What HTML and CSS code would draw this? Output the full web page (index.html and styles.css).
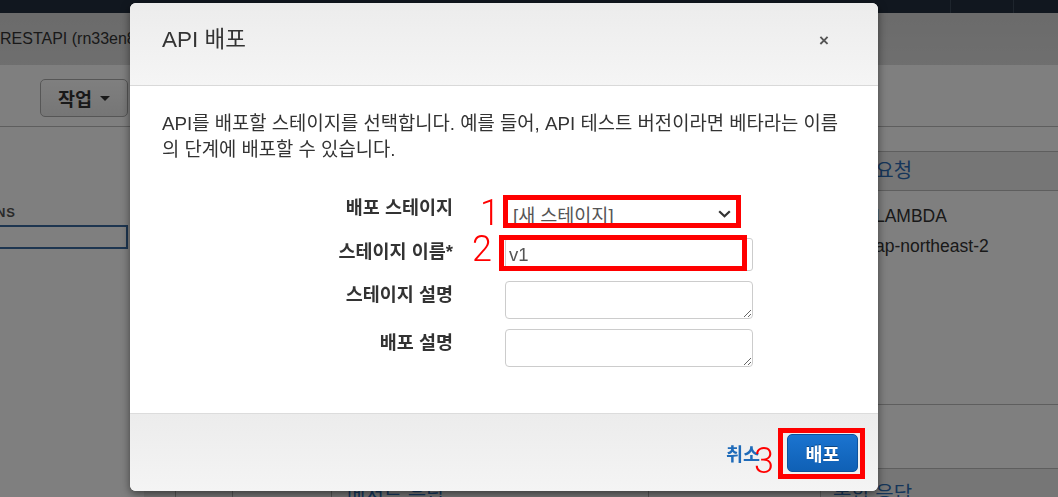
FILE: index.html
```html
<!DOCTYPE html>
<html lang="ko">
<head>
<meta charset="utf-8">
<title>API 배포</title>
<link rel="stylesheet" href="styles.css">
</head>
<body>
<div class="page">
  <div class="topbar">
    <span class="topbar-item wide"></span>
    <span class="topbar-item"></span>
  </div>
  <div class="crumbs">RESTAPI (rn33en8k2d) - /v1 - POST - 메서드 실행</div>
  <div class="toolbar">
    <button class="btn-action" type="button">작업 <span class="caret"></span></button>
  </div>
  <div class="content">
    <aside class="sidebar">
      <div class="side-head">OPERATIONS</div>
      <div class="side-input"></div>
    </aside>
    <section class="center">
      <div class="center-spacer"></div>
      <div class="center-bottom">
        <div class="cell c1"></div>
        <div class="cell c2"></div>
        <div class="cell c3"></div>
        <div class="cell c4">메서드 응답</div>
        <div class="cell c5"></div>
      </div>
    </section>
    <section class="right">
      <div class="right-gap"></div>
      <div class="right-head">통합 요청</div>
      <div class="right-row first">유형: LAMBDA</div>
      <div class="right-row">리전: ap-northeast-2</div>
      <div class="right-fill"></div>
      <div class="right-sep"></div>
      <div class="right-head bottom">통합 응답</div>
    </section>
  </div>
</div>

<div class="backdrop"></div>

<div class="modal" role="dialog" aria-labelledby="deploy-title">
  <div class="modal-header">
    <h4 class="modal-title" id="deploy-title">API 배포</h4>
    <button class="close" type="button" aria-label="닫기">×</button>
  </div>
  <div class="modal-body">
    <p class="intro">API를 배포할 스테이지를 선택합니다. 예를 들어, API 테스트 버전이라면 베타라는 이름의 단계에 배포할 수 있습니다.</p>
    <div class="form">
      <label class="form-label first">배포 스테이지</label>
      <div class="mark m1">
        <div class="select">
          <span>[새 스테이지]</span>
          <svg class="chev" width="13" height="8" viewBox="0 0 13 8"><path d="M1.2 1.2 L6.5 6.3 L11.8 1.2" fill="none" stroke="#333" stroke-width="2.2"/></svg>
        </div>
        <span class="num n1">1</span>
      </div>

      <label class="form-label">스테이지 이름*</label>
      <div class="mark m2">
        <input class="text-input" type="text" value="v1">
        <span class="num n2">2</span>
      </div>

      <label class="form-label">스테이지 설명</label>
      <textarea class="area"></textarea>

      <label class="form-label">배포 설명</label>
      <textarea class="area"></textarea>
    </div>
  </div>
  <div class="modal-footer">
    <a class="cancel" href="#">취소</a>
    <div class="mark m3">
      <button class="btn-primary" type="button">배포</button>
      <span class="num n3">3</span>
    </div>
  </div>
</div>
</body>
</html>
```

FILE: styles.css
```css
* { box-sizing: border-box; }

html, body {
  margin: 0;
  padding: 0;
}

body {
  width: 1058px;
  height: 497px;
  overflow: hidden;
  position: relative;
  background: #ffffff;
  color: #333;
  font-family: "Liberation Sans", "Noto Sans CJK KR", sans-serif;
}

/* ---------- background console page ---------- */
.page {
  display: flex;
  flex-direction: column;
  height: 497px;
}

.topbar {
  height: 13px;
  background: #232f3e;
  display: flex;
  justify-content: flex-end;
}
.topbar-item {
  width: 45px;
  border-left: 1px solid #3d4a5b;
}
.topbar-item.wide { width: 63px; }

.crumbs {
  height: 52px;
  background: linear-gradient(#d6d6d6, #dedede);
  font-size: 16px;
  line-height: 52px;
  color: #333;
  white-space: nowrap;
  overflow: hidden;
}

.toolbar {
  height: 62px;
  border-bottom: 1px solid #bdbdbd;
  padding: 14px 0 0 40px;
  background: #fff;
}

.btn-action {
  height: 38px;
  width: 88px;
  border: 1px solid #adadad;
  border-radius: 5px;
  background: linear-gradient(#ffffff, #ececec);
  font-family: inherit;
  font-size: 18.5px;
  font-weight: bold;
  color: #333;
  display: flex;
  align-items: center;
  justify-content: center;
  gap: 8px;
}
.caret {
  width: 0;
  height: 0;
  border-left: 5px solid transparent;
  border-right: 5px solid transparent;
  border-top: 5px solid #333;
}

.content {
  flex: 1;
  display: grid;
  grid-template-columns: 144px 676px 238px;
}

.sidebar {
  padding-top: 78px;
  padding-right: 16px;
}
.side-head {
  font-size: 13px;
  font-weight: bold;
  letter-spacing: 1px;
  color: #555;
  margin-left: -79px;
  white-space: nowrap;
}
.side-input {
  margin-top: 5px;
  height: 24px;
  margin-left: -4px;
  border: 2px solid #3b6aa0;
}

.center {
  display: flex;
  flex-direction: column;
}
.center-spacer { flex: 1; }
.center-bottom {
  height: 29px;
  display: grid;
  grid-template-columns: 31px 57px 99px 317px 172px;
  border-top: 1px solid #bdbdbd;
  background: #ececec;
}
.cell { border-left: 1px solid #aaa; }
.c1 { border-left: none; }
.c4 {
  color: #2a6ebb;
  font-size: 20px;
  line-height: 24px;
  padding: 14px 0 0 15px;
  white-space: nowrap;
}

.right {
  display: flex;
  flex-direction: column;
  border-left: 1px solid #bdbdbd;
}
.right-gap { height: 24px; }
.right-head {
  height: 40px;
  line-height: 38px;
  background: #ececec;
  border-top: 1px solid #bdbdbd;
  border-bottom: 1px solid #bdbdbd;
  padding-left: 12px;
  color: #2d6db5;
  font-size: 20px;
  white-space: nowrap;
}
.right-head.bottom {
  border-bottom: none;
  height: 29px;
  line-height: 24px;
  padding-top: 13px;
}
.right-row {
  padding-left: 12px;
  font-size: 17.5px;
  line-height: 30px;
  white-space: nowrap;
  color: #333;
}
.right-row.first { margin-top: 10px; }
.right-fill { height: 143px; }
.right-sep {
  height: 64px;
  border-top: 1px solid #bdbdbd;
}

/* ---------- backdrop ---------- */
.backdrop {
  position: fixed;
  inset: 0;
  background: rgba(0, 0, 0, 0.5);
}

/* ---------- modal ---------- */
.modal {
  position: absolute;
  left: 130px;
  top: 3px;
  width: 748px;
  height: 488px;
  background: #fff;
  border-radius: 6px;
  box-shadow: 0 3px 9px rgba(0, 0, 0, 0.5);
  display: flex;
  flex-direction: column;
}

.modal-header {
  height: 83px;
  flex: none;
  display: flex;
  justify-content: space-between;
  align-items: flex-start;
  padding: 24px 49px 0 32px;
  background: linear-gradient(#ececec, #f5f5f5);
  border-bottom: 1px solid #d9d9d9;
  border-radius: 6px 6px 0 0;
}
.modal-title {
  margin: 0;
  font-size: 22.5px;
  line-height: 26px;
  font-weight: normal;
  color: #333;
}
.close {
  border: none;
  background: transparent;
  padding: 0;
  margin-top: 2px;
  font-family: "Liberation Sans", sans-serif;
  font-size: 17px;
  line-height: 24px;
  font-weight: bold;
  color: #555;
}

.modal-body {
  flex: 1;
  padding: 25px 32px 0 32px;
}
.intro {
  margin: 0;
  font-size: 18.8px;
  line-height: 26px;
  color: #333;
}

.form {
  margin-top: 34px;
  display: grid;
  grid-template-columns: 291px 248px;
  column-gap: 52px;
  row-gap: 10px;
  align-items: start;
}
.form-label {
  text-align: right;
  font-size: 18.5px;
  font-weight: bold;
  line-height: 26px;
  margin-top: 1px;
  color: #333;
}
.form-label.first { margin-top: -2px; }

.mark { position: relative; }
.mark::after {
  content: "";
  position: absolute;
  border: 5px solid #ff0000;
  pointer-events: none;
}
.m1::after { top: -2px; left: -2px; right: 12px; bottom: 0; }
.m2::after { top: -3px; left: -6px; right: 6px; bottom: 0; }
.m3::after { top: -6px; left: -9px; right: -7px; bottom: -7px; }

.num {
  position: absolute;
  font-family: Roboto, "Liberation Sans", sans-serif;
  font-weight: 300;
  font-size: 36px;
  line-height: 36px;
  color: #ff0000;
}
.n1 { left: -25px; top: -2px; }
.n2 { left: -33px; top: -7px; }
.n3 { left: -33px; top: 9px; }

.select {
  width: 236px;
  height: 31px;
  border: 1px solid #ccc;
  border-radius: 3px;
  display: flex;
  align-items: center;
  justify-content: space-between;
  padding: 3px 9px 0 7px;
  font-size: 18.5px;
  color: #555;
  background: #fff;
}
.chev { display: block; }

.text-input {
  display: block;
  width: 248px;
  height: 33px;
  border: 1px solid #ccc;
  border-radius: 3px;
  padding: 0 0 0 3px;
  font-family: inherit;
  font-size: 18.5px;
  color: #555;
  outline: none;
}

.area {
  display: block;
  width: 248px;
  height: 38px;
  border: 1px solid #ccc;
  border-radius: 4px;
  resize: vertical;
  font-family: inherit;
  font-size: 18.5px;
}

.modal-footer {
  height: 78px;
  flex: none;
  border-top: 1px solid #dcdcdc;
  background: linear-gradient(#ececec, #f4f4f4);
  border-radius: 0 0 6px 6px;
  display: flex;
  justify-content: flex-end;
  align-items: center;
  gap: 27px;
  padding-right: 20px;
}
.cancel {
  color: #1f6bb9;
  font-size: 18.5px;
  font-weight: bold;
  text-decoration: none;
}
.btn-primary {
  display: block;
  width: 71px;
  height: 38px;
  border: 1px solid #0c539d;
  border-radius: 5px;
  background: linear-gradient(#1b74d0, #0f60b5);
  color: #fff;
  font-family: inherit;
  font-size: 18.5px;
  font-weight: bold;
  text-shadow: 0 -1px 0 rgba(0, 0, 0, 0.35);
  padding: 0;
}
```
